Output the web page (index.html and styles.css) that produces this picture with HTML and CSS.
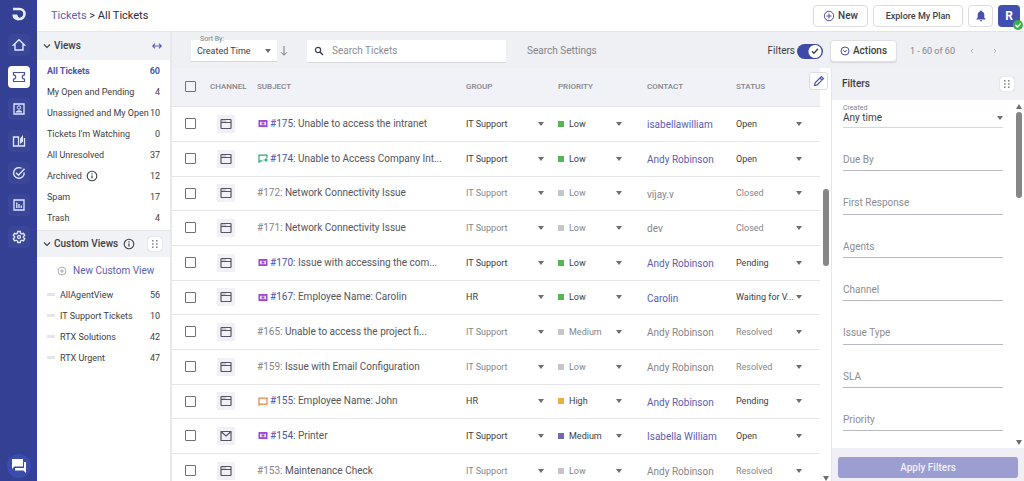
FILE: index.html
```html
<!DOCTYPE html>
<html lang="en">
<head>
    <meta charset="UTF-8">
    <meta name="viewport" content="width=device-width, initial-scale=1.0">
    <title>All Tickets</title>
    <link rel="stylesheet" href="styles.css">
</head>
<body>

    <svg class="sprite" aria-hidden="true">
        <symbol id="web" viewBox="0 0 12 12">
            <rect x="1" y="1.500" width="10" height="9" rx="0.500" fill="none" stroke="currentColor" stroke-width="1.200"/>
            <path d="M1 4.500h10M2.500 3h1M4.500 3h1" fill="none" stroke="currentColor"/>
        </symbol>
        <symbol id="mail" viewBox="0 0 12 12">
            <path d="M1 1.500h10v9H1zM1.500 2l4.500 4 4.500-4" fill="none" stroke="currentColor" stroke-width="1.200"/>
        </symbol>
        <symbol id="info" viewBox="0 0 12 12">
            <circle cx="6" cy="6" r="4.800" fill="none" stroke="currentColor" stroke-width="1.100"/>
            <path d="M6 5.400v3.200M6 3.300v1.200" stroke="currentColor" stroke-width="1.200"/>
        </symbol>
        <symbol id="plus" viewBox="0 0 12 12">
            <circle cx="6" cy="6" r="4.700" fill="none" stroke="currentColor"/>
            <path d="M6 3.500v5M3.500 6h5" stroke="currentColor"/>
        </symbol>
        <symbol id="chevron" viewBox="0 0 8 8">
            <path d="M1 2.500l3 3 3-3" fill="none" stroke="currentColor" stroke-width="1.100"/>
        </symbol>
        <symbol id="dots" viewBox="0 0 8 8">
            <path d="M1 0h1.600v1.600H1zM5 0h1.600v1.600H5zM1 3.200h1.600v1.600H1zM5 3.200h1.600v1.600H5zM1 6.400h1.600V8H1zM5 6.400h1.600V8H5z" fill="currentColor"/>
        </symbol>
        <symbol id="service" viewBox="0 0 10 9">
            <rect x="0.500" y="1" width="9" height="7" rx="0.500" fill="#9d45d0"/>
            <path d="M2 2.800h1.700v3.400H2zM6.300 2.800H8v3.400H6.300zM4.400 2.800h1.200v1H4.400zM4.400 5.200h1.200v1H4.400z" fill="#fff" fill-opacity="0.850"/>
        </symbol>
        <symbol id="reply" viewBox="0 0 10 9">
            <path d="M4.500 6.800H2.500L1 8.200V1.200h8v3M5.500 6h3.500M7.500 4.500L9 6 7.500 7.500" fill="none" stroke="#30a878" stroke-width="1.200"/>
        </symbol>
        <symbol id="note" viewBox="0 0 10 9">
            <path d="M1 8.200V1.200h8v5.900H2.200z" fill="none" stroke="#e88340" stroke-width="1.200"/>
        </symbol>
    </svg>

    <nav class="rail">
        <a href="#" class="logo" aria-label="Dashboard">
            <svg width="16" height="16" viewBox="0 0 16 16"><path d="M2 3h6.500a5 5 0 0 1 0 10H6" fill="none" stroke="#e8ecff" stroke-width="2.600"/><path d="M1.500 8.500h4.500l2 3.500v2.300H6.500a5 5 0 0 1-5-5z" fill="#e8ecff"/></svg>
        </a>
        <a href="#" aria-label="Home">
            <svg width="14" height="14" viewBox="0 0 14 14"><path d="M1.500 7L7 1.800 12.500 7H11v5H3V7z" fill="none" stroke="currentColor" stroke-width="1.400"/></svg>
        </a>
        <a href="#" class="active" aria-label="Tickets">
            <svg width="14" height="14" viewBox="0 0 14 14"><path d="M1.500 2.500h11v2.300a2.200 2.200 0 0 0 0 4.400v2.300h-11V9.200a2.200 2.200 0 0 0 0-4.400z" fill="none" stroke="currentColor" stroke-width="1.200"/></svg>
        </a>
        <a href="#" aria-label="Contacts">
            <svg width="14" height="14" viewBox="0 0 14 14"><path d="M2 2h10v10H2z" fill="none" stroke="currentColor" stroke-width="1.300"/><circle cx="7" cy="5.500" r="1.700" fill="none" stroke="currentColor"/><path d="M3.800 10.500c.4-3 6-3 6.400 0z" fill="currentColor"/></svg>
        </a>
        <a href="#" aria-label="Knowledge base">
            <svg width="14" height="14" viewBox="0 0 14 14"><path d="M1.500 3h5v9h-5zM6.500 12h6V4" fill="none" stroke="currentColor" stroke-width="1.300"/><path d="M8 4.500L11 1v6.500L8 10z" fill="currentColor"/></svg>
        </a>
        <a href="#" aria-label="Tasks">
            <svg width="14" height="14" viewBox="0 0 14 14"><path d="M12.200 6.500A5.300 5.300 0 1 1 9.500 2.300" fill="none" stroke="currentColor" stroke-width="1.400"/><path d="M4 6.800l2.500 2.400 6-6.400" fill="none" stroke="currentColor" stroke-width="1.500"/></svg>
        </a>
        <a href="#" aria-label="Reports">
            <svg width="14" height="14" viewBox="0 0 14 14"><path d="M2 2h10v10H2z" fill="none" stroke="currentColor" stroke-width="1.300"/><path d="M4.800 10V4.500M7 10V6M9.300 10V7.500" stroke="currentColor" stroke-width="1.300"/></svg>
        </a>
        <a href="#" aria-label="Settings">
            <svg width="14" height="14" viewBox="0 0 14 14"><path d="M5.800 1.500h2.400l.4 1.700 1.200.7 1.700-.6 1.200 2.100L11.400 6.600v.9l1.300 1.200-1.200 2.100-1.700-.6-1.200.7-.4 1.600H5.800l-.4-1.600-1.200-.7-1.700.6-1.200-2.100 1.300-1.200v-.9L1.300 5.400l1.200-2.100 1.700.6 1.200-.7z" fill="none" stroke="currentColor" stroke-width="1.400"/><circle cx="7" cy="7" r="1.500" fill="none" stroke="currentColor" stroke-width="1.300"/></svg>
        </a>
        <a href="#" class="chat" aria-label="Chat">
            <svg width="16" height="16" viewBox="0 0 16 16"><path d="M1 1h11v7.500H3.500L1 11z" fill="#fff"/><path d="M13 4h2v11l-2.500-2.500H4V10h9z" fill="#fff"/></svg>
        </a>
    </nav>

    <div class="page">
        <header class="topbar">
            <div class="breadcrumb"><a href="#">Tickets</a> &gt; All Tickets</div>
            <div class="top-actions">
                <button class="btn new"><svg width="12" height="12"><use href="#plus"/></svg>New</button>
                <button class="btn plan">Explore My Plan</button>
                <button class="btn bell" aria-label="Notifications">
                    <svg width="12" height="12" viewBox="0 0 12 12"><path d="M6 .5c.7 0 1 .5 1 1 1.600.5 2.300 1.800 2.300 3.300v2.700L10.500 9v.6h-9V9l1.200-1.500V4.800C2.700 3.300 3.400 2 5 1.500c0-.5.3-1 1-1zM4.800 10.200h2.400c0 1.600-2.400 1.600-2.400 0z" fill="currentColor"/></svg>
                </button>
                <button class="avatar">R
                    <svg class="online" width="10" height="10" viewBox="0 0 10 10"><circle cx="5" cy="5" r="5" fill="#3fae49"/><path d="M2.500 5l2 2 3.200-3.600" fill="none" stroke="#fff" stroke-width="1.300"/></svg>
                </button>
            </div>
        </header>

        <div class="workspace">
            <aside class="views">
                <div class="views-head">
                    <svg width="8" height="8"><use href="#chevron"/></svg>
                    <h2>Views</h2>
                    <svg class="resize" width="10" height="8" viewBox="0 0 10 8"><path d="M1 4h8M3 1.700L.8 4 3 6.300M7 1.700L9.200 4 7 6.300" fill="none" stroke="currentColor" stroke-width="1.200"/></svg>
                </div>
                <ul class="view-list">
                    <li class="selected"><a href="#">All Tickets</a><span>60</span></li>
                    <li><a href="#">My Open and Pending</a><span>4</span></li>
                    <li><a href="#">Unassigned and My Open</a><span>10</span></li>
                    <li><a href="#">Tickets I'm Watching</a><span>0</span></li>
                    <li><a href="#">All Unresolved</a><span>37</span></li>
                    <li><a href="#">Archived</a><svg width="12" height="12"><use href="#info"/></svg><span>12</span></li>
                    <li><a href="#">Spam</a><span>17</span></li>
                    <li><a href="#">Trash</a><span>4</span></li>
                </ul>
                <div class="views-head custom">
                    <svg width="8" height="8"><use href="#chevron"/></svg>
                    <h2>Custom Views</h2>
                    <svg width="12" height="12"><use href="#info"/></svg>
                    <button class="grip" aria-label="Arrange views"><svg width="8" height="8"><use href="#dots"/></svg></button>
                </div>
                <button class="new-view"><svg width="10" height="10"><use href="#plus"/></svg>New Custom View</button>
                <ul class="view-list custom-list">
                    <li><a href="#">AllAgentView</a><span>56</span></li>
                    <li><a href="#">IT Support Tickets</a><span>10</span></li>
                    <li><a href="#">RTX Solutions</a><span>42</span></li>
                    <li><a href="#">RTX Urgent</a><span>47</span></li>
                </ul>
            </aside>

            <main class="main">
                <div class="toolbar">
                    <div class="sort">
                        <label for="sort">Sort By:</label>
                        <div class="pick"><select id="sort"><option>Created Time</option></select></div>
                    </div>
                    <button class="plain" aria-label="Sort descending">
                        <svg width="10" height="12" viewBox="0 0 10 12"><path d="M5 1v9M2 7.200l3 3 3-3" fill="none" stroke="currentColor"/></svg>
                    </button>
                    <div class="search">
                        <svg width="10" height="10" viewBox="0 0 10 10"><circle cx="4" cy="4" r="2.600" fill="none" stroke="currentColor" stroke-width="1.200"/><path d="M6 6l3 3" stroke="currentColor" stroke-width="1.400"/></svg>
                        <input type="text" placeholder="Search Tickets" aria-label="Search Tickets">
                    </div>
                    <a href="#" class="search-settings">Search Settings</a>
                    <div class="toolbar-right">
                        <label class="switch">Filters<input type="checkbox" checked><svg width="10" height="10" viewBox="0 0 10 10"><path d="M2 5.200l2 2 4-4.400" fill="none" stroke="currentColor" stroke-width="1.300"/></svg></label>
                        <button class="btn actions"><svg width="10" height="10" viewBox="0 0 10 10"><circle cx="5" cy="5" r="4" fill="none" stroke="currentColor"/><path d="M3.200 4.200L5 6l1.800-1.800" fill="none" stroke="currentColor"/></svg>Actions</button>
                        <span class="range">1 - 60 of 60</span>
                        <div class="pager">
                            <button class="plain" aria-label="Previous page"><svg width="6" height="8" viewBox="0 0 6 8"><path d="M4 2L2 4l2 2" fill="none" stroke="currentColor"/></svg></button>
                            <button class="plain" aria-label="Next page"><svg width="6" height="8" viewBox="0 0 6 8"><path d="M2 2l2 2-2 2" fill="none" stroke="currentColor"/></svg></button>
                        </div>
                    </div>
                </div>

                <div class="panels">
                    <section class="tickets">
                        <table>
                            <colgroup>
                                <col class="c-check"><col class="c-channel"><col><col class="c-group"><col class="c-mid"><col class="c-mid"><col class="c-status">
                            </colgroup>
                            <thead>
                                <tr>
                                    <th><input type="checkbox" aria-label="Select all tickets"></th>
                                    <th>CHANNEL</th>
                                    <th>SUBJECT</th>
                                    <th>GROUP</th>
                                    <th>PRIORITY</th>
                                    <th>CONTACT</th>
                                    <th>STATUS</th>
                                </tr>
                            </thead>
                            <tbody id="rows"></tbody>
                        </table>
                        <div class="scroll list-scroll"><span class="thumb"></span><span class="down"></span></div>
                        <button class="edit-columns" aria-label="Edit columns">
                            <svg width="12" height="12" viewBox="0 0 12 12"><path d="M1.500 10.500l.6-2.700 6.300-6.300 2.100 2.100-6.300 6.300zM7 3l2.100 2.100" fill="none" stroke="currentColor" stroke-width="1.200"/></svg>
                        </button>
                    </section>

                    <form class="filters">
                        <div class="filters-head">
                            <h2>Filters</h2>
                            <button type="button" class="grip" aria-label="Arrange filters"><svg width="8" height="8"><use href="#dots"/></svg></button>
                        </div>
                        <div class="filters-body">
                            <div class="fields">
                                <div class="field created">
                                    <label for="created">Created</label>
                                    <div class="pick"><select id="created"><option>Any time</option></select></div>
                                </div>
                                <div class="field"><input type="text" placeholder="Due By" aria-label="Due By"></div>
                                <div class="field"><input type="text" placeholder="First Response" aria-label="First Response"></div>
                                <div class="field"><input type="text" placeholder="Agents" aria-label="Agents"></div>
                                <div class="field"><input type="text" placeholder="Channel" aria-label="Channel"></div>
                                <div class="field"><input type="text" placeholder="Issue Type" aria-label="Issue Type"></div>
                                <div class="field"><input type="text" placeholder="SLA" aria-label="SLA"></div>
                                <div class="field"><input type="text" placeholder="Priority" aria-label="Priority"></div>
                            </div>
                            <div class="scroll"><span class="up"></span><span class="thumb"></span><span class="down"></span></div>
                        </div>
                        <div class="filters-foot"><button type="button">Apply Filters</button></div>
                    </form>
                </div>
            </main>
        </div>
    </div>

    <script src="script.js"></script>
</body>
</html>
```

FILE: styles.css
```css
* {
    box-sizing: border-box;
}
body {
    margin: 0;
    height: 100vh;
    display: flex;
    overflow: hidden;
    font-family: Roboto, "Liberation Sans", sans-serif;
    font-size: 9px;
    line-height: 12px;
    color: #3d3d45;
    background-color: #fff;
}
a {
    color: inherit;
    text-decoration: none;
}
h2 {
    margin: 0;
    font-size: 10px;
    font-weight: 500;
}
ul {
    list-style: none;
    margin: 0;
    padding: 0;
}
button, input, select {
    font: inherit;
    color: inherit;
    margin: 0;
    padding: 0;
    border: none;
    background: none;
}
svg {
    display: block;
    flex: none;
}
.sprite {
    position: absolute;
    width: 0;
    height: 0;
}

/* left rail */
.rail {
    flex: none;
    width: 37px;
    padding: 3px 0;
    display: flex;
    flex-direction: column;
    align-items: center;
    gap: 10px;
    background-color: #334093;
    color: #dfe6ff;
}
.rail a {
    width: 22px;
    height: 22px;
    display: flex;
    align-items: center;
    justify-content: center;
    border-radius: 4px;
    background-color: #3a4799;
}
.rail .logo {
    background: none;
    margin-bottom: -1px;
}
.rail .active {
    background-color: #fff;
    color: #4a51a8;
}
.rail .chat {
    margin-top: auto;
    width: 24px;
    height: 24px;
    border-radius: 50%;
    background-color: #3b4dab;
}

/* top bar */
.page {
    flex: 1;
    min-width: 0;
    display: flex;
    flex-direction: column;
}
.topbar {
    height: 31px;
    padding: 0 4px 0 14px;
    display: flex;
    align-items: center;
    justify-content: space-between;
}
.breadcrumb {
    font-size: 11px;
    color: #2c2c33;
}
.breadcrumb a {
    color: #5a5eb4;
}
.top-actions {
    display: flex;
    gap: 5px;
}
.btn {
    height: 22px;
    display: flex;
    align-items: center;
    justify-content: center;
    gap: 3px;
    border: 1px solid #dcdce2;
    border-radius: 4px;
    background-color: #fff;
    font-size: 10px;
    font-weight: 500;
}
.btn svg {
    color: #4a51a8;
}
.new {
    width: 55px;
}
.plan {
    width: 90px;
    font-size: 9px;
}
.bell {
    width: 25px;
}
.avatar {
    position: relative;
    width: 22px;
    height: 22px;
    border-radius: 4px;
    background-color: #414fb0;
    color: #fff;
    font-size: 12px;
    font-weight: 700;
}
.online {
    position: absolute;
    right: -3px;
    bottom: -3px;
}

/* views */
.workspace {
    flex: 1;
    min-height: 0;
    display: flex;
}
.views {
    flex: none;
    width: 135px;
    border-right: 2px solid #e9e9ed;
}
.views-head {
    height: 29px;
    padding: 0 8px 0 6px;
    display: flex;
    align-items: center;
    gap: 3px;
    border-top: 1px solid #e6e7eb;
    background-color: #f1f2f6;
}
.resize {
    margin-left: auto;
    color: #5a5eb4;
}
.custom {
    height: 27px;
}
.custom h2 {
    margin-right: 2px;
}
.grip {
    width: 14px;
    height: 14px;
    margin-left: auto;
    display: flex;
    align-items: center;
    justify-content: center;
    border-radius: 3px;
    background-color: #fff;
    box-shadow: 0 0 1px #a0a0a8;
    color: #85858f;
}
.view-list {
    padding: 0 10px 2px;
}
.view-list li {
    height: 21px;
    display: flex;
    align-items: center;
    white-space: nowrap;
}
.view-list svg {
    margin-left: 4px;
}
.view-list span {
    margin-left: auto;
}
.view-list .selected {
    font-weight: 700;
    color: #4f55ae;
}
.new-view {
    height: 27px;
    padding-left: 20px;
    display: flex;
    align-items: center;
    gap: 6px;
    font-size: 10px;
    color: #5a5eb4;
}
.new-view svg {
    color: #9a9aa6;
}
.custom-list li::before {
    content: "";
    width: 8px;
    height: 3px;
    margin-right: 5px;
    background-color: #e6e6ea;
}

/* toolbar */
.main {
    flex: 1;
    min-width: 0;
    display: flex;
    flex-direction: column;
}
.toolbar {
    height: 37px;
    padding: 2px 26px 0 19px;
    display: flex;
    align-items: center;
    border-top: 1px solid #e2e4e8;
    background-color: #eef0f3;
}
.pick {
    display: flex;
    align-items: center;
}
.pick select {
    flex: 1;
    min-width: 0;
    height: 20px;
    appearance: none;
    text-overflow: ellipsis;
    outline: none;
}
.pick::after {
    content: "";
    flex: none;
    border: 3px solid transparent;
    border-top: 4px solid #6c6c74;
    border-bottom: 0;
}
.sort {
    position: relative;
    width: 86px;
    height: 22px;
    padding: 1px 6px;
    border-bottom: 1px solid #d8d9de;
    background-color: #fff;
}
.sort label {
    position: absolute;
    left: 9px;
    top: -5px;
    font-size: 7px;
    line-height: 8px;
    color: #85858c;
}
.plain {
    display: flex;
    color: #77777f;
}
.sort + .plain {
    margin: 0 18px 0 2px;
}
.search {
    flex: 0 1 199px;
    height: 23px;
    padding: 0 7px;
    display: flex;
    align-items: center;
    gap: 8px;
    border-bottom: 1px solid #d8d9de;
    background-color: #fff;
}
.search input {
    flex: 1;
    min-width: 0;
    font-size: 10px;
}
::placeholder {
    color: #8d8d94;
    opacity: 1;
}
.search-settings {
    margin-left: 21px;
    font-size: 10px;
    color: #85858c;
}
.toolbar-right {
    margin-left: auto;
    display: flex;
    align-items: center;
}
.switch {
    position: relative;
    display: flex;
    align-items: center;
    gap: 2px;
    font-size: 10px;
}
.switch input {
    appearance: none;
    width: 26px;
    height: 15px;
    border-radius: 8px;
    background: radial-gradient(circle at 18px 50%, #fff 6px, #3f4aa8 7px);
}
.switch svg {
    position: absolute;
    right: 3px;
}
.actions {
    width: 67px;
    margin: 0 13px 0 7px;
    border-color: #e0e1e6;
    box-shadow: 0 1px 1px #d5d6dc;
}
.range {
    color: #85858c;
}
.pager {
    margin-left: 14px;
    display: flex;
    gap: 17px;
}
.pager .plain {
    color: #b9bac2;
}

/* ticket list */
.panels {
    flex: 1;
    min-height: 0;
    display: flex;
}
.tickets {
    position: relative;
    flex: 1;
    min-width: 0;
    display: flex;
    align-items: flex-start;
    overflow: hidden;
}
table {
    flex: 1;
    min-width: 0;
    table-layout: fixed;
    border-collapse: collapse;
}
.c-check {
    width: 38px;
}
.c-channel {
    width: 47px;
}
.c-group {
    width: 92px;
}
.c-mid {
    width: 89px;
}
.c-status {
    width: 84px;
}
th, td {
    height: 35px;
    padding: 0;
    text-align: left;
    white-space: nowrap;
    border-bottom: 1px solid #e6e6e9;
}
tbody tr:nth-child(3n) td {
    height: 34px;
}
th {
    height: 38px;
    font-size: 8px;
    font-weight: 500;
    color: #85858c;
    background-color: #f1f2f8;
}
th:first-child, td:first-child {
    padding-left: 13px;
}
th input, td input {
    display: block;
    appearance: none;
    width: 11px;
    height: 11px;
    border: 1px solid #6f6f77;
    border-radius: 1px;
}
.channel {
    width: 18px;
    height: 18px;
    margin-left: 7px;
    display: flex;
    align-items: center;
    justify-content: center;
    background-color: #f0f0f6;
    color: #55555f;
}
.subject {
    display: flex;
    align-items: center;
    gap: 2px;
    font-size: 10px;
    color: #55555c;
}
.subject svg {
    margin-left: 1px;
}
.subject a {
    color: #4c52a8;
}
.contact {
    padding-top: 3px;
    font-size: 10px;
    color: #5a5eb4;
}
.group {
    padding-right: 14px;
}
.priority {
    padding-right: 25px;
}
.status {
    padding-right: 18px;
}
.dot {
    flex: none;
    width: 6px;
    height: 6px;
    margin-right: 5px;
    background-color: #c6c6ca;
}
.dot.low {
    background-color: #57b556;
}
.dot.medium {
    background-color: #6f68b4;
}
.dot.high {
    background-color: #eeb03c;
}
.resolved select, .resolved .subject a, .resolved .contact {
    color: #85858c;
}
.resolved .dot {
    background-color: #c6c6ca;
}

/* scroll bars */
.scroll {
    flex: none;
    align-self: stretch;
    width: 11px;
    display: flex;
    flex-direction: column;
    align-items: center;
}
.thumb {
    width: 6px;
    border-radius: 3px;
    background-color: #85858a;
}
.up, .down {
    border: 3px solid transparent;
}
.up {
    border-top: 0;
    border-bottom: 5px solid #6c6c74;
    margin-bottom: 3px;
}
.down {
    margin-top: auto;
    border-bottom: 0;
    border-top: 5px solid #6c6c74;
}
.list-scroll .thumb {
    height: 77px;
    margin-top: 121px;
}
.edit-columns {
    position: absolute;
    right: 3px;
    top: 4px;
    width: 19px;
    height: 18px;
    display: flex;
    align-items: center;
    justify-content: center;
    border: 1px solid #dcdce4;
    border-radius: 3px;
    background-color: #fff;
    color: #4a51a8;
}

/* filters */
.filters {
    flex: none;
    width: 193px;
    display: flex;
    flex-direction: column;
    border-left: 1px solid #e6e6ea;
}
.filters-head {
    height: 32px;
    padding: 0 10px;
    display: flex;
    align-items: center;
    background-color: #eff1f4;
}
.filters-body {
    flex: 1;
    min-height: 0;
    display: flex;
    overflow: hidden;
}
.filters-body .scroll {
    padding: 4px 0 3px;
}
.filters-body .thumb {
    height: 86px;
}
.fields {
    flex: 1;
    min-width: 0;
    padding: 0 10px 0 11px;
}
.field {
    height: 43px;
    padding-top: 22px;
    display: flex;
    flex-direction: column;
    border-bottom: 1px solid #b9b9bf;
}
.field:nth-child(3n) {
    height: 44px;
}
.field input {
    height: 18px;
    font-size: 10px;
}
.created {
    height: 28px;
    padding-top: 4px;
    border-color: #d8d8dc;
}
.created label {
    font-size: 7px;
    line-height: 8px;
    color: #85858c;
}
.created select {
    height: 12px;
    font-size: 10px;
}
.filters-foot {
    height: 33px;
    padding: 9px 6px 3px;
    background-color: #efeff5;
}
.filters-foot button {
    width: 100%;
    height: 21px;
    border-radius: 3px;
    background-color: #9c9dd0;
    color: #f0f0fa;
    font-size: 10px;
    font-weight: 500;
}
```

FILE: script.js
```javascript
// id, subject, group, priority, contact, status, badge, channel
const tickets = [
    [175, "Unable to access the intranet", "IT Support", "Low", "isabellawilliam", "Open", "service", "web"],
    [174, "Unable to Access Company Int...", "IT Support", "Low", "Andy Robinson", "Open", "reply", "web"],
    [172, "Network Connectivity Issue", "IT Support", "Low", "vijay.v", "Closed", "", "web"],
    [171, "Network Connectivity Issue", "IT Support", "Low", "dev", "Closed", "", "web"],
    [170, "Issue with accessing the com...", "IT Support", "Low", "Andy Robinson", "Pending", "service", "web"],
    [167, "Employee Name: Carolin", "HR", "Low", "Carolin", "Waiting for V...", "service", "web"],
    [165, "Unable to access the project fi...", "IT Support", "Medium", "Andy Robinson", "Resolved", "", "web"],
    [159, "Issue with Email Configuration", "IT Support", "Low", "Andy Robinson", "Resolved", "", "web"],
    [155, "Employee Name: John", "HR", "High", "Andy Robinson", "Pending", "note", "web"],
    [154, "Printer", "IT Support", "Medium", "Isabella William", "Open", "service", "mail"],
    [153, "Maintenance Check", "IT Support", "Low", "Andy Robinson", "Resolved", "", "web"]
];

function pick(name, value, dot) {
    return `<div class="pick ${name}">${dot || ""}<select aria-label="${name}"><option>${value}</option></select></div>`;
}

document.getElementById("rows").innerHTML = tickets.map(([id, subject, group, priority, contact, status, badge, channel]) => {
    const done = status === "Closed" || status === "Resolved";
    const icon = badge ? `<svg width="10" height="9"><use href="#${badge}"/></svg>` : "";
    return `<tr class="${done ? "resolved" : ""}">
        <td><input type="checkbox" aria-label="Select ticket ${id}"></td>
        <td><div class="channel"><svg width="12" height="12"><use href="#${channel}"/></svg></div></td>
        <td><div class="subject">${icon}<span><a href="#">#${id}:</a> ${subject}</span></div></td>
        <td>${pick("group", group)}</td>
        <td>${pick("priority", priority, `<span class="dot ${priority.toLowerCase()}"></span>`)}</td>
        <td><div class="contact"><a href="#">${contact}</a></div></td>
        <td>${pick("status", status)}</td>
    </tr>`;
}).join("");
```
